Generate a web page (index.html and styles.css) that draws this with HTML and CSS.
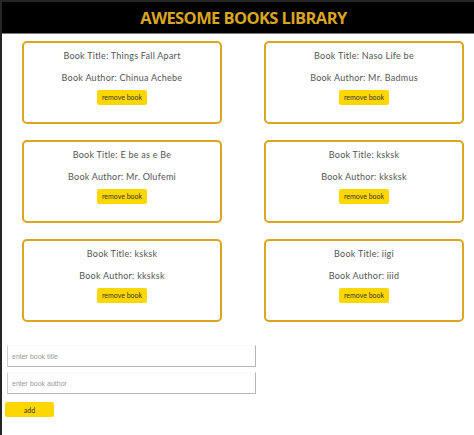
FILE: index.html
```html
<!DOCTYPE html>
<html lang="en">
<head>
<meta charset="utf-8">
<title>Awesome Books</title>
<link rel="stylesheet" href="styles.css">
</head>
<body>
<div class="frame">
  <header class="topbar">
    <h1 class="title">AWESOME BOOKS LIBRARY</h1>
  </header>
  <main class="books">
    <div class="card">
      <p class="line">Book Title: Things Fall Apart</p>
      <p class="line">Book Author: Chinua Achebe</p>
      <button class="remove">remove book</button>
    </div>
    <div class="card">
      <p class="line">Book Title: Naso Life be</p>
      <p class="line">Book Author: Mr. Badmus</p>
      <button class="remove">remove book</button>
    </div>
    <div class="card">
      <p class="line">Book Title: E be as e Be</p>
      <p class="line">Book Author: Mr. Olufemi</p>
      <button class="remove">remove book</button>
    </div>
    <div class="card">
      <p class="line">Book Title: ksksk</p>
      <p class="line">Book Author: kksksk</p>
      <button class="remove">remove book</button>
    </div>
    <div class="card">
      <p class="line">Book Title: ksksk</p>
      <p class="line">Book Author: kksksk</p>
      <button class="remove">remove book</button>
    </div>
    <div class="card">
      <p class="line">Book Title: iigi</p>
      <p class="line">Book Author: iiid</p>
      <button class="remove">remove book</button>
    </div>
  </main>
  <form class="addform">
    <input class="field" type="text" placeholder="enter book title">
    <input class="field" type="text" placeholder="enter book author">
    <button class="add" type="button">add</button>
  </form>
</div>
</body>
</html>
```
FILE: styles.css
```css
html, body {
  margin: 0;
  padding: 0;
  background: #fff;
}
.frame {
  box-sizing: border-box;
  height: 100vh;
  border-top: 2px solid #252526;
  border-left: 2px solid #252526;
  background: #fff;
  overflow: hidden;
}
.topbar {
  background: #000;
  height: 31px;
  border-bottom: 1px solid #7a7a7a;
  display: flex;
  align-items: center;
  justify-content: center;
  padding-left: 11px;
}
.title {
  margin: 0;
  font-family: "Open Sans", "DejaVu Sans", sans-serif;
  font-weight: 700;
  font-size: 16.5px;
  color: #daa520;
  letter-spacing: -0.6px;
}
.books {
  display: grid;
  grid-template-columns: 200px 200px;
  column-gap: 42px;
  row-gap: 16px;
  padding: 7px 0 0 20px;
}
.card {
  box-sizing: border-box;
  height: 83px;
  border: 2px solid #daa520;
  border-radius: 5px;
  padding-top: 7px;
  display: flex;
  flex-direction: column;
  align-items: center;
}
.line {
  margin: 0 0 9.5px;
  font-family: "Lato", "Noto Sans", sans-serif;
  font-size: 9px;
  letter-spacing: 0.25px;
  line-height: 12px;
  color: #555;
}
.line + .line {
  margin-bottom: 6px;
}
.remove {
  width: 50px;
  height: 15px;
  padding: 0;
  border: none;
  border-radius: 2px;
  background: #ffd700;
  font-family: "Lato", "Noto Sans", sans-serif;
  font-size: 7px;
  color: #333;
}
.addform {
  display: flex;
  flex-direction: column;
  align-items: flex-start;
  padding: 23px 0 0 3px;
}
.field {
  box-sizing: border-box;
  width: 249px;
  height: 22px;
  margin: 0 0 5px 2px;
  padding: 0 4px;
  border: 1px solid #b5b5b5;
  border-top-color: #f7f7f7;
  border-left-color: #cfcfcf;
  border-radius: 0;
  font-family: "Liberation Sans", Arial, sans-serif;
  font-size: 7px;
  outline: none;
}
.field::placeholder {
  color: #9a9a9a;
}
.field + .field {
  margin-bottom: 8px;
}
.add {
  width: 49px;
  height: 15px;
  padding: 0;
  border: none;
  border-radius: 2px;
  background: #ffd700;
  font-family: "Lato", "Noto Sans", sans-serif;
  font-size: 7px;
  color: #333;
}
```
